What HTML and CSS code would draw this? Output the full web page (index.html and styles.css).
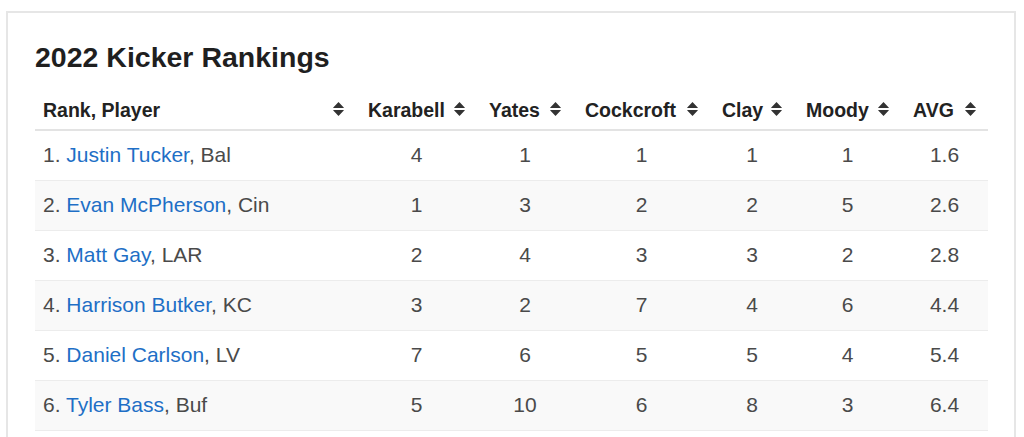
FILE: index.html
```html
<!DOCTYPE html>
<html lang="en">
<head>
<meta charset="utf-8">
<title>2022 Kicker Rankings</title>
<link rel="stylesheet" href="styles.css">
</head>
<body>
<div class="card">
  <h2 class="title">2022 Kicker Rankings</h2>
  <table class="rank-table">
    <colgroup>
      <col class="c-player"><col class="c-kar"><col class="c-yates"><col class="c-cock"><col class="c-clay"><col class="c-moody"><col class="c-avg">
    </colgroup>
    <thead>
      <tr>
        <th class="first"><div class="th-in"><span>Rank, Player</span><svg class="sort" viewBox="0 0 11 14"><path d="M5.5 0 L10.7 5.4 Q11.2 6 10.4 6 H0.6 Q-0.2 6 0.3 5.4 Z M0.6 8 H10.4 Q11.2 8 10.7 8.6 L5.5 14 L0.3 8.6 Q-0.2 8 0.6 8 Z"/></svg></div></th>
        <th><div class="th-in"><span>Karabell</span><svg class="sort" viewBox="0 0 11 14"><path d="M5.5 0 L10.7 5.4 Q11.2 6 10.4 6 H0.6 Q-0.2 6 0.3 5.4 Z M0.6 8 H10.4 Q11.2 8 10.7 8.6 L5.5 14 L0.3 8.6 Q-0.2 8 0.6 8 Z"/></svg></div></th>
        <th><div class="th-in"><span>Yates</span><svg class="sort" viewBox="0 0 11 14"><path d="M5.5 0 L10.7 5.4 Q11.2 6 10.4 6 H0.6 Q-0.2 6 0.3 5.4 Z M0.6 8 H10.4 Q11.2 8 10.7 8.6 L5.5 14 L0.3 8.6 Q-0.2 8 0.6 8 Z"/></svg></div></th>
        <th><div class="th-in"><span>Cockcroft</span><svg class="sort" viewBox="0 0 11 14"><path d="M5.5 0 L10.7 5.4 Q11.2 6 10.4 6 H0.6 Q-0.2 6 0.3 5.4 Z M0.6 8 H10.4 Q11.2 8 10.7 8.6 L5.5 14 L0.3 8.6 Q-0.2 8 0.6 8 Z"/></svg></div></th>
        <th><div class="th-in"><span>Clay</span><svg class="sort" viewBox="0 0 11 14"><path d="M5.5 0 L10.7 5.4 Q11.2 6 10.4 6 H0.6 Q-0.2 6 0.3 5.4 Z M0.6 8 H10.4 Q11.2 8 10.7 8.6 L5.5 14 L0.3 8.6 Q-0.2 8 0.6 8 Z"/></svg></div></th>
        <th><div class="th-in"><span>Moody</span><svg class="sort" viewBox="0 0 11 14"><path d="M5.5 0 L10.7 5.4 Q11.2 6 10.4 6 H0.6 Q-0.2 6 0.3 5.4 Z M0.6 8 H10.4 Q11.2 8 10.7 8.6 L5.5 14 L0.3 8.6 Q-0.2 8 0.6 8 Z"/></svg></div></th>
        <th><div class="th-in"><span>AVG</span><svg class="sort" viewBox="0 0 11 14"><path d="M5.5 0 L10.7 5.4 Q11.2 6 10.4 6 H0.6 Q-0.2 6 0.3 5.4 Z M0.6 8 H10.4 Q11.2 8 10.7 8.6 L5.5 14 L0.3 8.6 Q-0.2 8 0.6 8 Z"/></svg></div></th>
      </tr>
    </thead>
    <tbody>
      <tr><td class="player">1. <a href="#">Justin Tucker</a>, Bal</td><td>4</td><td>1</td><td>1</td><td>1</td><td>1</td><td>1.6</td></tr>
      <tr><td class="player">2. <a href="#">Evan McPherson</a>, Cin</td><td>1</td><td>3</td><td>2</td><td>2</td><td>5</td><td>2.6</td></tr>
      <tr><td class="player">3. <a href="#">Matt Gay</a>, LAR</td><td>2</td><td>4</td><td>3</td><td>3</td><td>2</td><td>2.8</td></tr>
      <tr><td class="player">4. <a href="#">Harrison Butker</a>, KC</td><td>3</td><td>2</td><td>7</td><td>4</td><td>6</td><td>4.4</td></tr>
      <tr><td class="player">5. <a href="#">Daniel Carlson</a>, LV</td><td>7</td><td>6</td><td>5</td><td>5</td><td>4</td><td>5.4</td></tr>
      <tr><td class="player">6. <a href="#">Tyler Bass</a>, Buf</td><td>5</td><td>10</td><td>6</td><td>8</td><td>3</td><td>6.4</td></tr>
    </tbody>
  </table>
</div>
</body>
</html>
```

FILE: styles.css
```css
html, body {
  margin: 0;
  padding: 0;
  background: #ffffff;
}

body {
  font-family: "Liberation Sans", Arial, sans-serif;
  color: #4a4a4a;
  padding: 11px 0 0 6px;
}

.card {
  box-sizing: border-box;
  width: 1010px;
  border: 2px solid #e6e6e6;
  padding: 29px 26px 40px 27px;
  background: #fff;
}

.title {
  margin: 0 0 15px;
  font-size: 28.5px;
  line-height: 31px;
  font-weight: 700;
  color: #1f1f1f;
}

.rank-table {
  table-layout: fixed;
  width: 953px;
  border-collapse: separate;
  border-spacing: 0;
}

.c-player { width: 321px; }
.c-kar { width: 121px; }
.c-yates { width: 96px; }
.c-cock { width: 137px; }
.c-clay { width: 84px; }
.c-moody { width: 107px; }
.c-avg { width: 87px; }

.rank-table th {
  padding: 8px 12px 5px;
  font-size: 19.5px;
  line-height: 28px;
  font-weight: 700;
  color: #222;
  text-align: left;
  border-bottom: 2px solid #e3e3e3;
  white-space: nowrap;
}

.rank-table th.first {
  padding-left: 8px;
}

.th-in {
  display: flex;
  align-items: center;
  justify-content: space-between;
}

.sort {
  width: 11px;
  height: 14px;
  fill: #333;
  flex: none;
  margin-top: -2px;
}

.rank-table td {
  padding: 7px 8px 9px;
  font-size: 21px;
  line-height: 33px;
  text-align: center;
  border-bottom: 1px solid #ececec;
  color: #4a4a4a;
  white-space: nowrap;
}

.rank-table td.player {
  text-align: left;
}

.rank-table tbody tr:nth-child(even) td {
  background: #f9f9f9;
}

.rank-table a {
  color: #1e6fc6;
  text-decoration: none;
}
```
